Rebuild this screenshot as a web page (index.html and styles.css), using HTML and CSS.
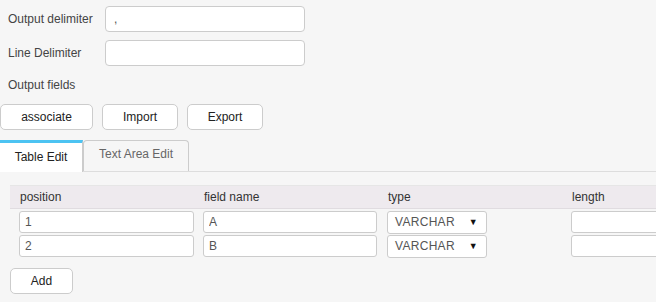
FILE: index.html
```html
<!DOCTYPE html>
<html lang="en">
<head>
    <meta charset="UTF-8">
    <title>Output settings</title>
    <link rel="stylesheet" href="styles.css">
</head>
<body>

    <div class="settings">
        <div class="form-row">
            <label class="form-label">Output delimiter</label>
            <input class="text-input" type="text" value=",">
        </div>
        <div class="form-row">
            <label class="form-label">Line Delimiter</label>
            <input class="text-input" type="text" value="">
        </div>
        <div class="form-row section-label">Output fields</div>

        <div class="button-bar">
            <button class="btn btn-associate">associate</button>
            <button class="btn btn-import">Import</button>
            <button class="btn btn-export">Export</button>
        </div>
    </div>

    <div class="tabs">
        <div class="tab active">Table Edit</div>
        <div class="tab">Text Area Edit</div>
    </div>

    <div class="table-panel">
        <div class="field-table">
            <div class="table-head">
                <div class="cell">position</div>
                <div class="cell">field name</div>
                <div class="cell">type</div>
                <div class="cell">length</div>
            </div>
            <div class="table-row">
                <div class="cell"><input class="cell-input" type="text" value="1"></div>
                <div class="cell"><input class="cell-input narrow" type="text" value="A"></div>
                <div class="cell"><div class="select-box"><span>VARCHAR</span><span class="arrow">&#9660;</span></div></div>
                <div class="cell"><input class="cell-input" type="text" value=""></div>
            </div>
            <div class="table-row">
                <div class="cell"><input class="cell-input" type="text" value="2"></div>
                <div class="cell"><input class="cell-input narrow" type="text" value="B"></div>
                <div class="cell"><div class="select-box"><span>VARCHAR</span><span class="arrow">&#9660;</span></div></div>
                <div class="cell"><input class="cell-input" type="text" value=""></div>
            </div>
        </div>
        <button class="btn btn-add">Add</button>
    </div>

</body>
</html>
```

FILE: styles.css
```css
body {
    font-family: 'Liberation Sans', Arial, sans-serif;
    font-size: 12px;
    background-color: #f6f6f6;
    color: #333;
    margin: 0;
    padding: 0;
    overflow: hidden;
}

.settings {
    padding-top: 6px;
}

.form-row {
    display: flex;
    align-items: center;
    height: 26px;
    margin-bottom: 8px;
}

.form-label {
    width: 97px;
    padding-left: 8px;
    color: #444;
}

.section-label {
    padding-left: 8px;
    height: 22px;
    color: #444;
}

.text-input {
    box-sizing: border-box;
    width: 200px;
    height: 26px;
    border: 1px solid #ccc;
    border-radius: 4px;
    background: #fff;
    padding: 0 8px;
    font-family: inherit;
    font-size: 12px;
    color: #555;
    outline: none;
}

.button-bar {
    display: flex;
    gap: 9px;
    margin-top: 8px;
}

.btn {
    box-sizing: border-box;
    height: 26px;
    border: 1px solid #ccc;
    border-radius: 5px;
    background: #fff;
    font-family: inherit;
    font-size: 12px;
    color: #222;
    padding: 0;
}

.btn-associate {
    width: 93px;
}

.btn-import {
    width: 76px;
}

.btn-export {
    width: 76px;
}

.tabs {
    display: flex;
    margin-top: 10px;
    border-bottom: 1px solid #ddd;
    height: 31px;
}

.tab {
    box-sizing: border-box;
    height: 31px;
    padding: 6px 15px 0;
    border: 1px solid #ccc;
    border-bottom: none;
    border-radius: 4px 4px 0 0;
    color: #666;
    white-space: nowrap;
}

.tab.active {
    width: 83px;
    height: 32px;
    padding: 7px 0 0;
    text-align: center;
    border: none;
    border-top: 3px solid #4cc3f2;
    border-right: 1px solid #ccc;
    border-radius: 0;
    background: #fff;
    color: #222;
}

.table-panel {
    padding: 13px 0 0 10px;
    overflow: hidden;
}

.field-table {
    width: 736px;
}

.table-head {
    display: flex;
    height: 24px;
    align-items: center;
    background: #eeeaee;
    border-top: 1px solid #e6e6e6;
    border-bottom: 1px solid #e0dce0;
    box-sizing: border-box;
    color: #333;
}

.table-head .cell {
    padding-left: 10px;
}

.table-row {
    display: flex;
    height: 24px;
    align-items: center;
}

.table-head + .table-row {
    margin-top: 1px;
}

.cell {
    box-sizing: border-box;
    width: 184px;
    flex-shrink: 0;
    padding-left: 9px;
}

.cell-input {
    box-sizing: border-box;
    width: 175px;
    height: 22px;
    border: 1px solid #ccc;
    border-radius: 3px;
    background: #fff;
    padding: 0 5px;
    font-family: inherit;
    font-size: 12px;
    color: #555;
    outline: none;
}

.cell-input.narrow {
    width: 174px;
}

.select-box {
    box-sizing: border-box;
    display: flex;
    justify-content: space-between;
    align-items: center;
    width: 100px;
    height: 23px;
    border: 1px solid #ccc;
    border-radius: 3px;
    background: #fff;
    padding: 0 8px 0 7px;
    color: #555;
    letter-spacing: 0.3px;
}

.arrow {
    font-size: 9px;
    color: #111;
}

.btn-add {
    width: 63px;
    margin-top: 10px;
}
```
